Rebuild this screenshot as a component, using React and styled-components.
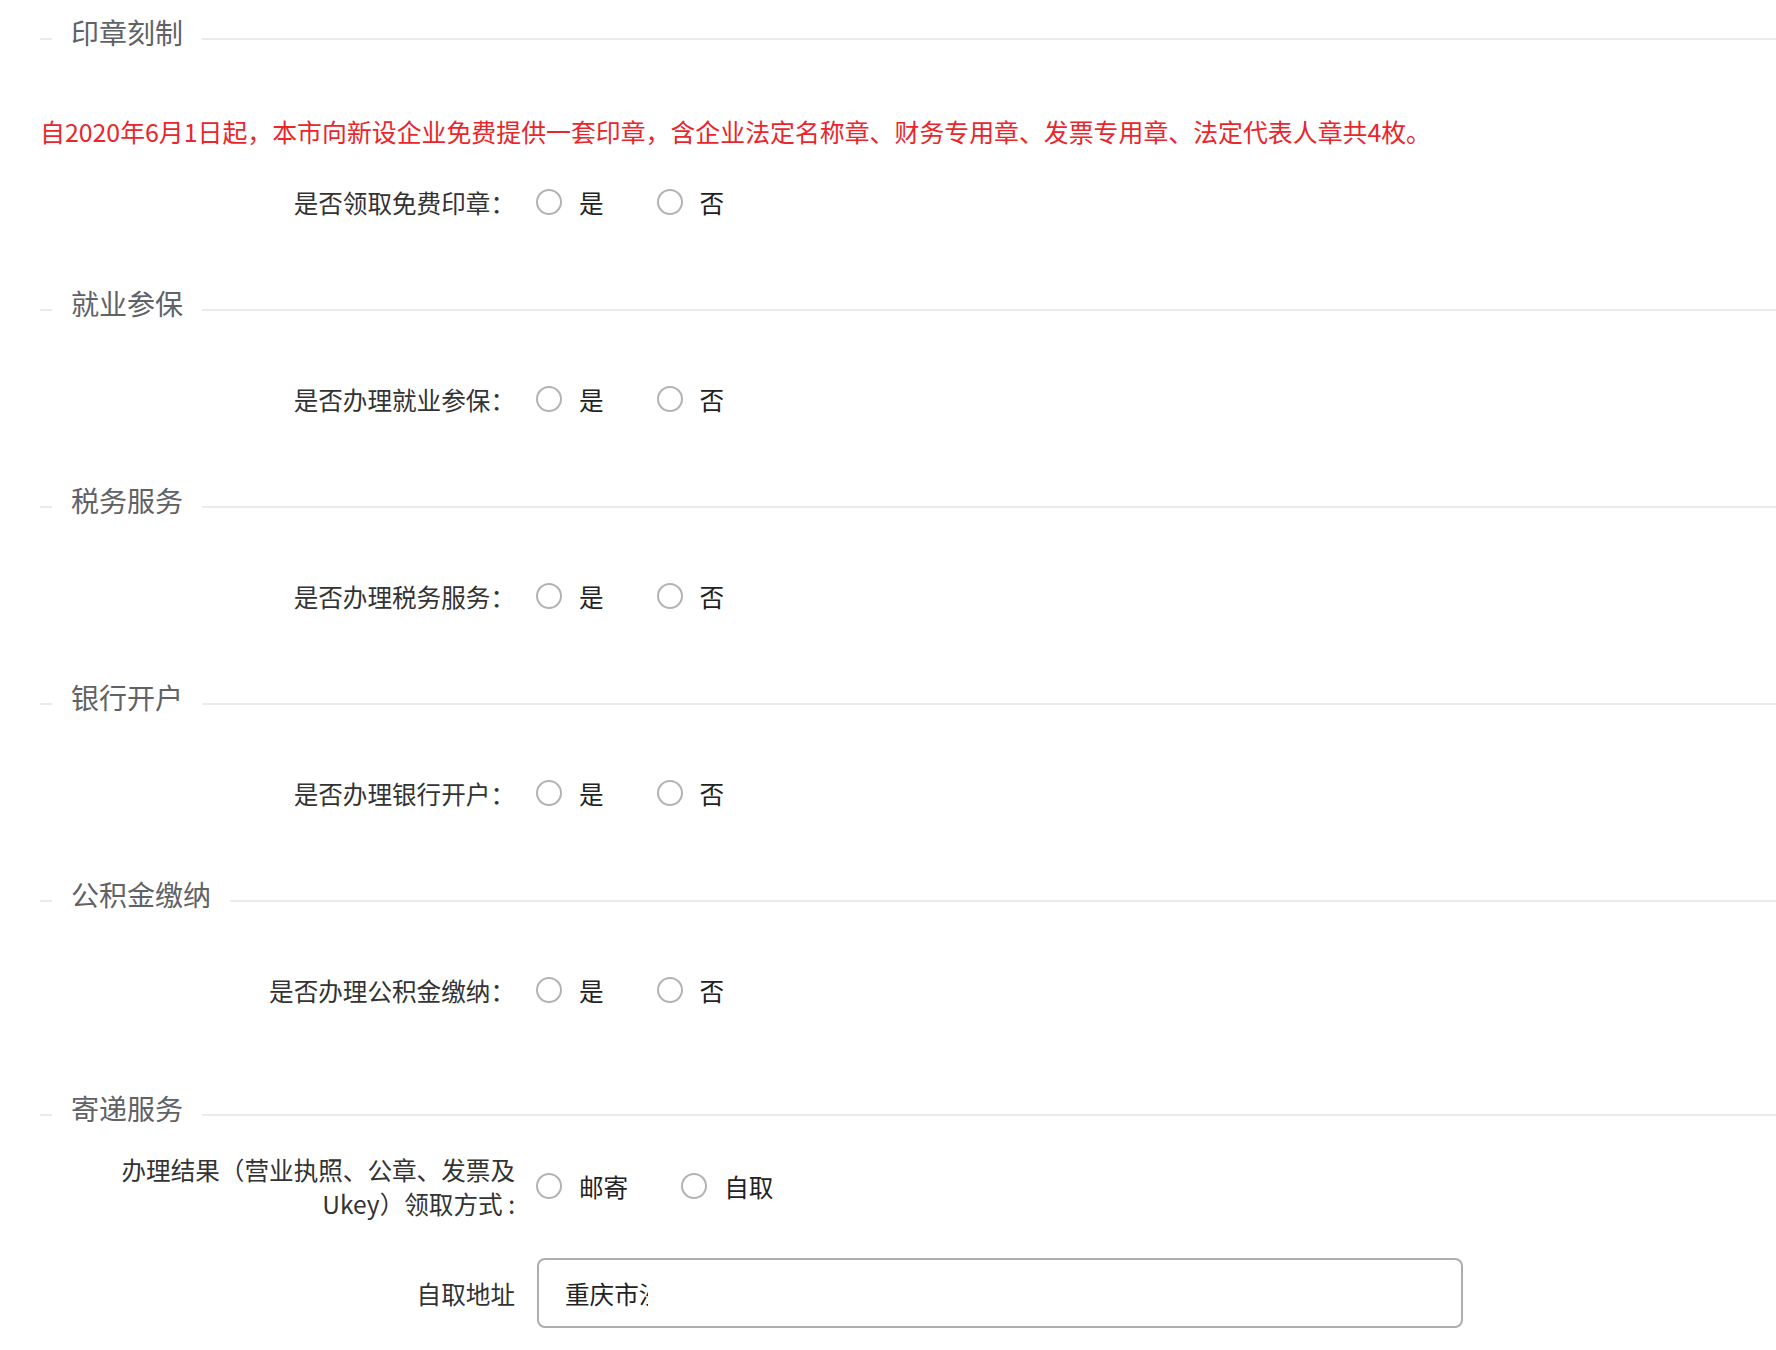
import React from 'react';
import styled, { createGlobalStyle } from 'styled-components';

const GlobalStyle = createGlobalStyle`
  body {
    margin: 0;
    background: #fff;
    font-family: "Noto Sans CJK SC", "Noto Sans", sans-serif;
  }
`;

const sections = [
  { title: '印章刻制', label: '是否领取免费印章：', notice: true },
  { title: '就业参保', label: '是否办理就业参保：' },
  { title: '税务服务', label: '是否办理税务服务：' },
  { title: '银行开户', label: '是否办理银行开户：' },
  { title: '公积金缴纳', label: '是否办理公积金缴纳：' },
];

const Radio = ({ children }) => (
  <Option>
    <Circle />
    <OptionText>{children}</OptionText>
  </Option>
);

const App = () => {
  return (
    <Page>
      <GlobalStyle />
      {sections.map((s, i) => (
        <Section key={s.title} $gap={i === 0 ? 0 : 55}>
          <Head>
            <LeadLine />
            <Title>{s.title}</Title>
            <Rule />
          </Head>
          {s.notice && (
            <Notice>
              自2020年6月1日起，本市向新设企业免费提供一套印章，含企业法定名称章、财务专用章、发票专用章、法定代表人章共4枚。
            </Notice>
          )}
          <Row $gap={s.notice ? 29 : 50}>
            <Label>{s.label}</Label>
            <Options>
              <Radio>是</Radio>
              <Radio>否</Radio>
            </Options>
          </Row>
        </Section>
      ))}

      <Section $gap={72}>
        <Head>
          <LeadLine />
          <Title>寄递服务</Title>
          <Rule />
        </Head>
        <Row $gap={22}>
          <Label $narrow>办理结果（营业执照、公章、发票及Ukey）领取方式 :</Label>
          <Options>
            <Radio>邮寄</Radio>
            <Radio>自取</Radio>
          </Options>
        </Row>
        <Row $gap={38}>
          <Label>自取地址</Label>
          <Options>
            <Field>
              <FieldValue>重庆市沙坪坝区</FieldValue>
            </Field>
          </Options>
        </Row>
      </Section>
    </Page>
  );
};

const Page = styled.div`
  padding: 10px 0 40px 40px;
`;

const Section = styled.section`
  margin-top: ${(p) => p.$gap}px;
`;

const Head = styled.div`
  display: flex;
  align-items: center;
  height: 44px;
`;

const LeadLine = styled.span`
  width: 12px;
  height: 2px;
  margin-top: 14px;
  background: #ebebeb;
`;

const Rule = styled.span`
  flex: 1;
  height: 2px;
  margin-top: 14px;
  background: #ebebeb;
`;

const Title = styled.h3`
  margin: 0;
  padding: 0 19px;
  font-size: 28px;
  font-weight: 400;
  line-height: 44px;
  color: #606266;
`;

const Notice = styled.p`
  margin: 59px 0 0;
  font-size: 24.9px;
  line-height: 36px;
  color: #e8262b;
`;

const Row = styled.div`
  display: flex;
  align-items: center;
  min-height: 48px;
  margin-top: ${(p) => p.$gap}px;
`;

const Label = styled.label`
  flex-shrink: 0;
  box-sizing: border-box;
  width: 475px;
  padding-left: ${(p) => (p.$narrow ? 78 : 0)}px;
  text-align: right;
  font-size: 24.6px;
  line-height: 34px;
  color: #333;
`;

const Options = styled.div`
  display: flex;
  align-items: center;
  margin-left: 21px;
`;

const Option = styled.span`
  display: flex;
  align-items: center;
  margin-right: 53px;
`;

const Circle = styled.span`
  box-sizing: border-box;
  width: 26px;
  height: 26px;
  margin-right: 17px;
  border: 2px solid #b3b3b3;
  border-radius: 50%;
`;

const OptionText = styled.span`
  font-size: 24.6px;
  line-height: 34px;
  color: #222;
`;

const Field = styled.div`
  box-sizing: border-box;
  display: flex;
  align-items: center;
  width: 926px;
  height: 70px;
  margin-left: 1px;
  padding: 0 26px;
  border: 2px solid #adadad;
  border-radius: 8px;
`;

const FieldValue = styled.span`
  width: 83px;
  overflow: hidden;
  white-space: nowrap;
  font-size: 24.6px;
  color: #222;
`;

export default App;
